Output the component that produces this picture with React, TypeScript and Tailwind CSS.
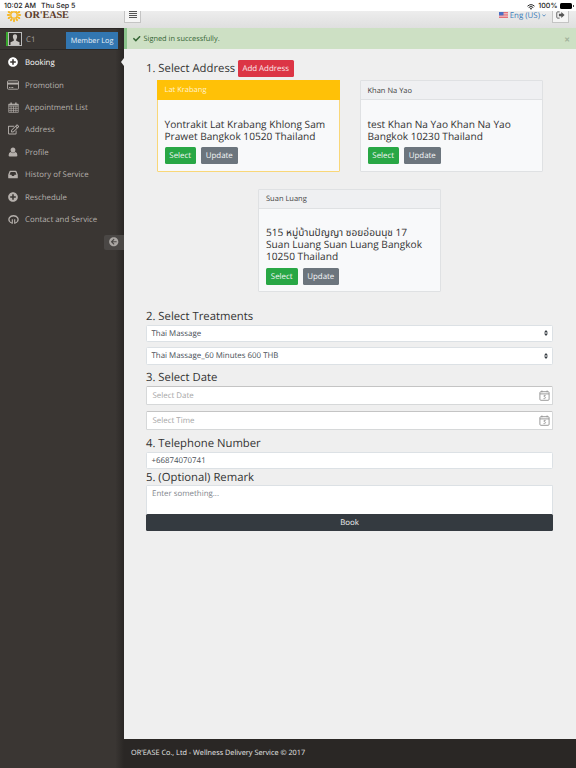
import React from "react";
import {
  FaPlusCircle, FaRegEdit, FaArrowCircleLeft, FaCheck,
} from "react-icons/fa";

const CalendarGrid = () => (
  <svg viewBox="0 0 12 12" className="h-[11px] w-[11px]" fill="none" stroke="currentColor">
    <path d="M.8 2.3h10.4v9H.8zM.8 4.6h10.4M.8 6.9h10.4M.8 9.1h10.4M3.4 4.6v6.7M6 4.6v6.7M8.6 4.6v6.7" strokeWidth=".75" />
    <path d="M3.4.6v2.6M8.6.6v2.6" strokeWidth="1.5" />
    <path d="M.8 3h10.4" strokeWidth="1.3" />
  </svg>
);

const Card = () => (
  <svg viewBox="0 0 12 10" className="h-[10px] w-[12px]" fill="none" stroke="currentColor">
    <rect x=".5" y=".8" width="11" height="8.4" rx=".8" strokeWidth=".9" />
    <path d="M.5 3.600h11" strokeWidth="1.900" />
    <path d="M2 7.500h1.500M4.300 7.500h2" strokeWidth=".9" />
  </svg>
);

const Person = () => (
  <svg viewBox="0 0 10 10" className="h-[10px] w-[10px]" fill="currentColor">
    <path d="M5 .5c1.500 0 2.400 1 2.400 2.500S6.400 5.700 5 5.700 2.600 4.500 2.600 3 3.500.5 5 .5z" />
    <path d="M2.700 5.100Q5 7.200 7.300 5.100 9.400 5.400 9.400 8.300 9.400 9.600 8.200 9.600H1.800Q.6 9.600.6 8.300.6 5.400 2.700 5.100z" />
  </svg>
);

const Inbox = () => (
  <svg viewBox="0 0 10 9" className="h-[9px] w-[10px]">
    <path fill="currentColor" fillRule="evenodd" d="M2.200.7h5.600q.5 0 .7.500L9.800 4.700V7.700q0 .6-.6.6H.8q-.6 0-.6-.6V4.700L1.500 1.200q.2-.5.700-.5zM2.600 2L1.600 4.700h1.800l.6 1.200h2l.6-1.200h1.800L7.400 2z" />
  </svg>
);

const Headphones = () => (
  <svg viewBox="0 0 12 12" className="h-[11px] w-[11px]" fill="none" stroke="currentColor">
    <path d="M1.700 8.200C0 5.400 1.800 1.900 6 1.900s6 3.500 4.300 6.300" strokeWidth="1.400" />
    <path d="M4.700 5.700v5M7.300 5.700v5" strokeWidth="1.200" />
    <path d="M1.500 7.800Q2.300 9.600 4.400 9.900M10.500 7.800Q9.700 9.600 7.600 9.900" strokeWidth="1.200" />
  </svg>
);

const SignOut = () => (
  <svg viewBox="0 0 10 9" className="h-[8px] w-[9px]" fill="none" stroke="currentColor">
    <path d="M4 1H1.800Q.8 1 .8 2v5q0 1 1 1H4" strokeWidth="1" />
    <path d="M3.200 3.200h2.700V1L9.600 4.500 5.900 8V5.800H3.200z" fill="currentColor" stroke="none" />
  </svg>
);

const menu: [string, React.ReactNode][] = [
  ["Booking", <FaPlusCircle size={10} />],
  ["Promotion", <Card />],
  ["Appointment List", <CalendarGrid />],
  ["Address", <FaRegEdit size={11} />],
  ["Profile", <Person />],
  ["History of Service", <Inbox />],
  ["Reschedule", <FaPlusCircle size={10} />],
  ["Contact and Service", <Headphones />],
];

const Sun = () => (
  <svg viewBox="-8 -8 16 16" className="h-4 w-4 shrink-0">
    {[0, 30, 60, 90, 120, 150, 180, 210, 240, 270, 300, 330].map((a) => (
      <path key={a} d="M-.8-3.800L-1-6.200Q0-8.200 1-6.200L.8-3.800Z" fill="#f6b51e" transform={`rotate(${a})`} />
    ))}
    <circle r="3.200" fill="none" stroke="#f6b51e" strokeWidth="1.300" />
  </svg>
);

const Flag = () => (
  <svg viewBox="0 0 9 6" className="h-[6px] w-[9px]">
    <path fill="#f3d5d8" d="M0 0h9v6H0z" />
    <path d="M0 .5h9M0 2.200h9M0 3.900h9M0 5.500h9" stroke="#e0555f" strokeWidth=".8" />
    <path fill="#4a6fc4" d="M0 0h4.500v3.400H0z" />
  </svg>
);

const DateIcon = () => (
  <svg viewBox="0 0 11 11" className="h-[11px] w-[11px]" fill="none" stroke="#909090">
    <rect x=".9" y="1.700" width="9.200" height="8.600" rx="1" strokeWidth=".9" />
    <path d="M.9 3.900h9.200M2.900.5v1.800M8.100.5v1.800" strokeWidth=".9" />
    <path d="M6.700 5.400H5.100v1.300c1.800-.3 2 1.900.1 1.900h-.7" strokeWidth=".8" />
  </svg>
);

const Sorter = () => (
  <svg viewBox="0 0 4 6" className="h-[6px] w-[4px]" fill="#343a40">
    <path d="M2 0l2 2.500H0zM2 6l2-2.500H0z" />
  </svg>
);

function AddressCard({ title, address, active }: { title: string; address: string; active?: boolean }) {
  return (
    <div className={`w-[183px] rounded-[1px] border bg-[#f8f9fa] ${active ? "border-[#f9d778]" : "border-[#dfe1e3]"}`}>
      <div className={`flex items-center border-b text-[7.500px] ${active ? "-mx-px -mt-px h-[20px] border-[#ffc107] bg-[#ffc107] px-[8px] pt-[3px] text-[#fff3d0]" : "h-[19px] border-[#dfe1e3] bg-[#eff0f2] px-[7px] pt-[2.500px] text-[#444]"}`}>
        {title}
      </div>
      <div className="px-[7px] pt-[17.500px] pb-[6.500px]">
        <p className="text-[10.150px] leading-[12px] whitespace-pre text-[#333]">{address}</p>
        <div className="mt-[5.500px] flex gap-[5px] text-[7.900px] text-[#f4f6f7]">
          <div className="flex h-[17px] w-[31.500px] items-center justify-center rounded-[1.500px] bg-[#28a745] pt-[3px]">Select</div>
          <div className="flex h-[17px] w-[36.500px] items-center justify-center rounded-[1.500px] bg-[#6c757d] pt-[3px]">Update</div>
        </div>
      </div>
    </div>
  );
}

const Heading = ({ children }: { children: React.ReactNode }) => (
  <h2 className="h-4 text-[11.300px] leading-[18px] whitespace-nowrap text-[#333]">{children}</h2>
);

const field = "flex items-center justify-between rounded-[1.500px] border bg-white pl-[4.500px] text-[7.900px]";

export default function App() {
  return (
    <div className="flex h-[768px] w-[576px] flex-col overflow-hidden bg-[#efefef] font-['Open_Sans','Noto_Sans_Thai','Noto_Sans',sans-serif] text-[#333] [text-rendering:geometricPrecision]">
      <div className="z-10 flex h-[11px] shrink-0 items-center bg-white px-[4px] pt-[2px] font-['Inter',sans-serif] text-[7.100px] font-medium text-[#222]">
        <span>10:02 AM</span>
        <span className="ml-[5px]">Thu Sep 5</span>
        <svg viewBox="0 0 8 6" className="ml-auto h-[6px] w-[8px]" fill="none" stroke="#222">
          <path d="M.5 2.200Q4-.9 7.500 2.200M1.700 3.500Q4 1.500 6.300 3.500" strokeWidth="1" />
          <path d="M2.800 4.500Q4 3.500 5.200 4.500L4 5.800z" fill="#222" stroke="none" />
        </svg>
        <span className="ml-[3px]">100%</span>
        <div className="-mt-px mr-[1px] ml-[2.500px] h-[6px] w-[12px] rounded-[1.500px] bg-black" />
        <div className="-mt-px -mr-[2px] h-[2px] w-px bg-[#444]" />
      </div>

      <header className="flex h-[17px] shrink-0 justify-between bg-linear-to-b from-[#ededed] to-[#dfdfdf]">
        <div className="flex">
          <div className="-mt-[4px] ml-[6px] flex h-[16px] w-[118px] items-center">
            <Sun />
            <span className="mt-[2px] ml-[2.500px] font-['Liberation_Serif',serif] text-[10.300px] font-bold tracking-[-0.120px] text-[#5d3d2b]">OR'EASE</span>
          </div>
          <div className="flex h-[12px] w-[17px] flex-col items-center gap-[1px] border border-t-0 border-[#c4c4c4] bg-[#f5f5f5]">
            <i className="h-px w-[8px] bg-[#555]" />
            <i className="h-px w-[8px] bg-[#555]" />
            <i className="h-px w-[8px] bg-[#555]" />
            <i className="h-px w-[8px] bg-[#555]" />
          </div>
        </div>
        <div className="flex pr-[7px]">
          <div className="-mt-[1px] flex h-[10px] items-center text-[7.900px] text-[#3a7ab8]">
            <Flag />
            <span className="ml-[1.500px] pt-[3px]">Eng (US)</span>
            <svg viewBox="0 0 5 3" className="ml-[2px] h-[3px] w-[4px]" fill="none" stroke="currentColor"><path d="M.5.5l2 1.800 2-1.800" /></svg>
          </div>
          <div className="ml-[6px] flex h-[12px] w-[17px] items-center justify-center border border-t-0 border-[#c4c4c4] bg-[#f5f5f5] pb-[4px] text-[#555]">
            <SignOut />
          </div>
        </div>
      </header>

      <div className="flex min-h-0 flex-1">
        <aside className="w-[124px] shrink-0 bg-[#3a3633] bg-linear-to-r from-[#3a3633] from-93% to-[#2a2725] text-[7.850px]">
          <div className="flex h-[22px] items-center border-t border-b border-[#2b2826] pl-[6px]">
            <div className="flex h-[14.500px] w-[16px] border-l-2 border-[#39a82e] bg-[#bbb] p-[1px]">
              <div className="flex flex-1 items-end justify-center overflow-hidden bg-[#33302e] text-[#c8c5c2]">
                <svg viewBox="0 0 12 12" className="h-[12px] w-[12px]" fill="currentColor">
                  <path d="M6 1.200c1.600 0 2.300 1.200 2.100 2.800C8 5.300 7.500 6 7.200 6.500v1.300L10.500 9.200V12h-9V9.200l3.300-1.400V6.500C4.500 6 4 5.300 3.900 4 3.700 2.400 4.400 1.200 6 1.200z" />
                </svg>
              </div>
            </div>
            <span className="ml-[4px] pt-[3.500px] text-[#a8a4a0]">C1</span>
            <div className="mt-[3px] mr-[6px] ml-auto flex h-[17px] w-[52px] items-center justify-center bg-[#3276b1] pt-[1px] text-[7.250px] text-[#e9f1f8]">Member Log</div>
          </div>
          <nav className="pt-[1px]">
            {menu.map(([label, icon], i) => (
              <div key={label} className={`flex h-[22.450px] items-center ${i === 0 ? "text-white" : "text-[#b5b0ac]"}`}>
                <span className="ml-[7px] flex w-[12px] justify-center">{icon}</span>
                <span className="ml-[6px] pt-[3.500px] whitespace-nowrap">{label}</span>
                {i === 0 && <i className="ml-auto border-y-[4px] border-r-[3px] border-y-transparent border-r-[#efefef]" />}
              </div>
            ))}
          </nav>
          <div className="mt-[4px] ml-auto flex h-[15px] w-[20px] items-center justify-center rounded-l-[2px] bg-[#4a4745] text-[#aaa6a3]">
            <FaArrowCircleLeft size={9.5} />
          </div>
        </aside>

        <div className="flex min-w-0 flex-1 flex-col">
          <div className="flex h-[21px] shrink-0 items-center border-l-[3px] border-[#8ac38b] bg-[#cde0c4] pl-[6px] text-[7.400px] text-[#356635]">
            <FaCheck size={7.500} />
            <span className="ml-[3px] pt-[2px]">Signed in successfully.</span>
            <span className="mr-[6px] ml-auto pt-[2px] text-[10px] font-bold text-[#a3b39c]">×</span>
          </div>

          <main className="flex-1 pr-[23px] pl-[22px]">
            <div className="flex h-[31px] items-end">
              <div className="mb-[4px]"><Heading>1. Select Address</Heading></div>
              <div className="mb-[3px] ml-[2.500px] flex h-[17px] w-[56px] items-center justify-center rounded-[1.500px] bg-[#dc3545] pt-[2.500px] text-[7.900px] text-[#fbe9eb]">Add Address</div>
            </div>
            <div className="flex flex-wrap justify-center gap-x-[20px] gap-y-[17px]">
              <AddressCard active title="Lat Krabang" address={"Yontrakit Lat Krabang Khlong Sam\nPrawet Bangkok 10520 Thailand"} />
              <AddressCard title="Khan Na Yao" address={"test Khan Na Yao Khan Na Yao\nBangkok 10230 Thailand"} />
              <AddressCard title="Suan Luang" address={"515 หมู่บ้านปัญญา ซอยอ่อนนุช 17\nSuan Luang Suan Luang Bangkok\n10250 Thailand"} />
            </div>

            <div className="mt-[15.500px]"><Heading>2. Select Treatments</Heading></div>
            <div className={`${field} mt-[1px] h-[17px] border-[#dce1e5] pr-[4px] text-[#495057]`}><span className="pt-[3.500px]">Thai Massage</span><Sorter /></div>
            <div className={`${field} mt-[5px] h-[18px] border-[#dce1e5] pr-[4px] text-[#495057]`}><span className="pt-[3.500px]">Thai Massage_60 Minutes 600 THB</span><Sorter /></div>

            <div className="mt-[4px]"><Heading>3. Select Date</Heading></div>
            <div className={`${field} mt-[1px] h-[19px] border-[#d6d8d9] border-t-[#c4c4c4] pr-[2px] text-[#a6a6a6]`}><span className="ml-px pt-[3px]">Select Date</span><DateIcon /></div>
            <div className={`${field} mt-[6px] h-[19px] border-[#d6d8d9] border-t-[#c4c4c4] pr-[2px] text-[#a6a6a6]`}><span className="ml-px pt-[3px]">Select Time</span><DateIcon /></div>

            <div className="mt-[5px]"><Heading>4. Telephone Number</Heading></div>
            <div className={`${field} mt-[1px] h-[17px] border-[#dce1e5] pt-[3px] text-[#495057]`}>+66874070741</div>
            <div><Heading>5. (Optional) Remark</Heading></div>
            <div className="h-[29px] rounded-t-[1.500px] border border-b-0 border-[#dce1e5] bg-white pt-[3.500px] pl-[5px] text-[7.900px] text-[#7f868c]">Enter something...</div>
            <div className="flex h-[17px] items-center justify-center rounded-[1.500px] bg-[#343a40] pt-[3.500px] text-[7.900px] text-[#f1f1f1]">Book</div>
          </main>

          <footer className="flex h-[29px] shrink-0 items-center bg-[#2a2725] pl-[7px] text-[7.300px] text-[#e8e8e8]">
            OR'EASE Co., Ltd - Wellness Delivery Service © 2017
          </footer>
        </div>
      </div>
    </div>
  );
}
